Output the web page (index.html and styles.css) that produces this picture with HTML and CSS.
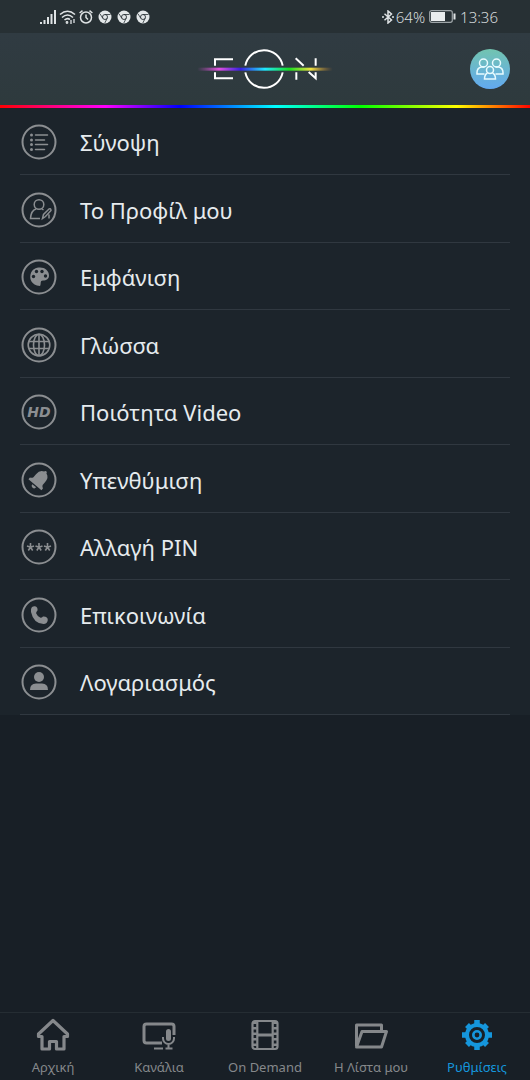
FILE: index.html
```html
<!DOCTYPE html>
<html lang="el">
<head>
<meta charset="utf-8">
<meta name="viewport" content="width=device-width, initial-scale=1">
<title>EON – Ρυθμίσεις</title>
<link rel="stylesheet" href="styles.css">
</head>
<body>
<svg class="defs" aria-hidden="true">
  <symbol id="browser" viewBox="0 0 14 14">
    <circle cx="7" cy="7" r="6.5" fill="#e3e7e9"/>
    <circle cx="7" cy="7" r="2.5" fill="none" stroke="#273034" stroke-width=".9"/>
    <path d="M7 4.500h5.500M4.800 8.300L2 3.800M9.200 8.300L6.800 13" stroke="#273034" stroke-width=".8" fill="none"/>
  </symbol>
</svg>
<div class="app">
  <div class="status">
    <div class="status-left">
      <svg width="16" height="14" viewBox="0 0 16 14" stroke="#dfe3e5" stroke-width="2"><path d="M1 14v-2M4.500 14v-4M8 14V7M11.500 14V4M15 14V0"/></svg>
      <svg width="17" height="14" viewBox="0 0 17 14" fill="none" stroke="#dfe3e5" stroke-width="1.600"><path d="M1 4.500Q8.500-2 16 4.500M3 7.500Q8.500 2.500 14 7.500M5.500 10Q8.500 7.500 11 9.500"/><circle cx="8" cy="12.500" r=".6"/><path d="M12 10v4M15 9v4" stroke-width="1.300"/></svg>
      <svg width="14" height="14" viewBox="0 0 14 14" fill="none" stroke="#dfe3e5" stroke-width="1.500"><circle cx="7" cy="7.500" r="5.500"/><path d="M7 4.500v3l2 2M.6 3L3.500.6M13.400 3L10.500.6"/></svg>
      <div class="browsers">
        <svg width="14" height="14"><use href="#browser"/></svg>
        <svg width="14" height="14"><use href="#browser"/></svg>
        <svg width="14" height="14"><use href="#browser"/></svg>
      </div>
    </div>
    <div class="status-right">
      <svg width="12" height="14" viewBox="0 0 12 14" fill="none" stroke="#dfe3e5" stroke-width="1.500"><path d="M2.500 3.800l7 6.200L6 13V1l3.500 3-7 6.200"/><path d="M0 7h2M10 7h2"/></svg>
      <span>64%</span>
      <svg class="battery" width="27" height="13" viewBox="0 0 27 13"><rect x=".7" y=".7" width="22.600" height="11.600" rx="2" fill="none" stroke="#9ea5a8" stroke-width="1.200"/><path d="M2 2h14v9H2z" fill="#e9eced"/><path d="M25.500 3.500v6" stroke="#dfe3e5" stroke-width="2"/></svg>
      <time>13:36</time>
    </div>
  </div>

  <header class="header">
    <svg class="logo" width="140" height="40" viewBox="45 45 420 120" role="img" aria-label="EON">
      <defs><linearGradient id="beam"><stop offset="0" stop-color="#c050c0" stop-opacity="0"/><stop offset=".16" stop-color="#e050e0"/><stop offset=".32" stop-color="#3520e0"/><stop offset=".5" stop-color="#20e8ff"/><stop offset=".68" stop-color="#18e020"/><stop offset=".84" stop-color="#f0e040"/><stop offset="1" stop-color="#d08030" stop-opacity="0"/></linearGradient></defs>
      <g fill="none" stroke="#fff" stroke-width="6">
        <path d="M159 76H105V95M105 115V133H159M196 95A57 57 0 0 1 308 95M196 115A57 57 0 0 0 308 115M407 73V95M349 115V137M347 73L371 95M386 114L407 133V115"/>
      </g>
      <rect x="52" y="101" width="406" height="9" fill="url(#beam)"/>
    </svg>
    <button class="profiles" type="button" aria-label="Προφίλ">
      <svg width="28" height="24" viewBox="0 0 28 24" fill="none" stroke="#e8fbff" stroke-width="1.500"><circle cx="7.500" cy="6" r="4"/><circle cx="20.500" cy="6" r="4"/><path d="M8.500 17H1v-1.500q0-4.500 4.500-5.500h3M19.500 17H27v-1.500q0-4.500-4.500-5.500h-3"/><circle cx="14" cy="13" r="3.500"/><path d="M11.500 16q-3 1.500-3 6h11q0-4.500-3-6"/></svg>
    </button>
  </header>

  <main class="content">
    <ul class="menu">
      <li><a href="#"><svg class="icon" viewBox="0 0 36 36"><circle cx="18" cy="18" r="16.500"/><path d="M14.500 11h12M14.500 16h9M14.500 20.500h12M14.500 25.500h9" stroke-linecap="round" stroke-width="1.500"/><g class="solid"><circle cx="10.500" cy="11" r="1.500"/><circle cx="10.500" cy="16" r="1.500"/><circle cx="10.500" cy="20.500" r="1.500"/><circle cx="10.500" cy="25.500" r="1.500"/></g></svg><span>Σύνοψη</span></a></li>
      <li><a href="#"><svg class="icon" viewBox="0 0 36 36"><circle cx="18" cy="18" r="16.500"/><g stroke-width="1.500"><circle cx="18" cy="12.500" r="4.800"/><path d="M15 17q-5 1.500-5.500 9.500H19M21 17l1.500 1"/><path d="M21.500 26.500l1-4 5.500-5.500q2-1.200 2 1.500l-5.500 6zM28 22.500v4"/></g></svg><span>Το Προφίλ μου</span></a></li>
      <li><a href="#"><svg class="icon" viewBox="0 0 36 36"><circle cx="18" cy="18" r="16.500"/><path class="solid" d="M19 27C10 26 8.500 20 9.500 15.500C11 10 15 8.500 19 8.500C24 8.500 28 12 28 16.500C28 20 25.500 21.500 22 21.500C18.500 21.500 20.500 25 19 27Z"/><g class="hole"><circle cx="12.500" cy="17.500" r="1.700"/><circle cx="15.500" cy="12.500" r="1.700"/><circle cx="21" cy="12.500" r="1.700"/><circle cx="24.500" cy="17" r="1.700"/></g></svg><span>Εμφάνιση</span></a></li>
      <li><a href="#"><svg class="icon" viewBox="0 0 36 36"><circle cx="18" cy="18" r="16.500"/><g stroke-width="1.600"><circle cx="18" cy="18" r="10.800"/><ellipse cx="18" cy="18" rx="5.500" ry="10.800"/><path d="M18 7v22M8 14.500h20M8 21.500h20"/></g></svg><span>Γλώσσα</span></a></li>
      <li><a href="#"><svg class="icon" viewBox="0 0 36 36"><circle cx="18" cy="18" r="16.500"/><text class="hd" x="18" y="23" text-anchor="middle">HD</text></svg><span>Ποιότητα Video</span></a></li>
      <li><a href="#"><svg class="icon" viewBox="0 0 36 36"><circle cx="18" cy="18" r="16.500"/><g class="solid" transform="rotate(40 18 18)"><path d="M16.500 8.200a1.500 1.500 0 0 1 3 0q4.500 1.300 4.500 7.300v4q.5 1.500 2.500 2.500v2.300h-17V22q2-1 2.500-2.500v-4q0-6 4.500-7.300zM15.500 25.500h5a2.500 2.500 0 0 1-5 0z"/></g></svg><span>Υπενθύμιση</span></a></li>
      <li><a href="#"><svg class="icon" viewBox="0 0 36 36"><circle cx="18" cy="18" r="16.500"/><path d="M9.500 14v4.200M6 17l3.500 1.200L13 17M7.300 21.500l2.200-3.300 2.200 3.300M18 14v4.200M14.500 17l3.500 1.200 3.500-1.200M15.800 21.500l2.200-3.300 2.200 3.300M26.500 14v4.200M23 17l3.500 1.200L30 17M24.300 21.500l2.200-3.300 2.200 3.300" stroke-width="1.600"/></svg><span>Αλλαγή PIN</span></a></li>
      <li><a href="#"><svg class="icon" viewBox="0 0 36 36"><circle cx="18" cy="18" r="16.500"/><path class="solid" d="M10 12.500Q10.500 9 14 9.300Q17 10 16.500 13.500Q14.800 15 15.200 16.500Q16.500 19.500 19.500 20.800Q21 20.800 22 19.500Q26.800 19.200 26.800 23Q26.300 27 22.500 27Q12.500 26.500 10 15Z"/></svg><span>Επικοινωνία</span></a></li>
      <li><a href="#"><svg class="icon" viewBox="0 0 36 36"><circle cx="18" cy="18" r="16.500"/><g class="solid"><circle cx="18" cy="13" r="5"/><path d="M9 26q0-6.500 6-6.500h6q6 0 6 6.500z"/></g></svg><span>Λογαριασμός</span></a></li>
    </ul>
  </main>

  <nav class="tabs">
    <a href="#"><svg width="34" height="34" viewBox="0 0 34 34" stroke-linejoin="round"><path d="M17 2.500L2.500 16v2.500H6V31h7.500v-7.500h7V31H28V18.500h3.500V16z" stroke-width="3.200"/></svg><span>Αρχική</span></a>
    <a href="#"><svg width="34" height="34" viewBox="0 0 34 34"><path d="M20 25H4.500q-2.500 0-2.500-2.500V8.500Q2 6 4.500 6h25Q32 6 32 8.500V17" stroke-width="3"/><path d="M12 30.500h9" stroke-width="2"/><rect class="fill" x="24" y="11" width="5" height="12" rx="2.500"/><path d="M21 19v1.500a5.500 5.500 0 0 0 11 0V19M26.500 26v4.500M23.500 30.500h7" stroke-width="2"/></svg><span>Κανάλια</span></a>
    <a href="#"><svg width="34" height="34" viewBox="0 0 34 34"><rect x="4.500" y="3" width="25" height="28" rx="2.500" stroke-width="2.200"/><path d="M9.300 3v28M24.700 3v28" stroke-width="2.200"/><path d="M9 17h16" stroke-width="3"/><path d="M6.800 3.500v27M27.200 3.500v27" stroke-width="4" stroke-dasharray="2.500 3"/></svg><span>On Demand</span></a>
    <a href="#"><svg width="34" height="34" viewBox="0 0 34 34" stroke-linejoin="round"><path d="M2.500 28V7h25v6M2.500 29L8 13.500h24.500L27.500 29z" stroke-width="3"/></svg><span>Η Λίστα μου</span></a>
    <a href="#" class="active" aria-current="page"><svg width="34" height="34" viewBox="0 0 34 34"><circle cx="17" cy="17" r="10" stroke-width="4"/><path d="M17 2v5M17 27v5M2 17h5M27 17h5M7 7l3 3M24 24l3 3M7 27l3-3M24 10l3-3" stroke-width="5.500"/><circle cx="17" cy="17" r="3.700" stroke-width="2.600"/></svg><span>Ρυθμίσεις</span></a>
  </nav>
</div>
</body>
</html>
```
FILE: styles.css
```css
* { box-sizing: border-box; }

body {
  margin: 0;
  background: #181f26;
  color: #e6ebee;
  font-family: "Noto Sans", sans-serif;
}

a { color: inherit; text-decoration: none; }
svg { flex: none; }
.defs { display: none; }

.app {
  display: flex;
  flex-direction: column;
  min-height: 100vh;
}

.status {
  display: flex;
  align-items: center;
  justify-content: space-between;
  height: 33px;
  padding: 0 32px 0 40px;
  background: #273034;
}
.status-left, .status-right, .browsers { display: flex; align-items: center; }
.status-left { gap: 3px; }
.browsers { gap: 5px; margin-left: 2px; }
.status-right {
  gap: 2px;
  color: #d8dcde;
  font-size: 15px;
  font-weight: 300;
}
.battery { margin: 0 2px; }

.header {
  display: grid;
  grid-template-columns: 1fr auto 1fr;
  align-items: center;
  height: 75px;
  padding: 0 20px;
  background: linear-gradient(#303b42, #2e3a3d);
  border-bottom: 3px solid;
  border-image: linear-gradient(90deg, #f00, #f0f 20%, #00f 34%, #0ff 52%, #0f0 68%, #ff0 86%, #f00) 1;
}
.logo { grid-column: 2; }
.profiles {
  display: grid;
  place-items: center;
  justify-self: end;
  width: 40px;
  height: 40px;
  padding: 0;
  border: 0;
  border-radius: 50%;
  background: linear-gradient(#72c4b0, #62a9f0);
}

.content { flex: 1; }
.menu {
  margin: 0;
  padding: 0 20px;
  list-style: none;
  background: #1c242b;
}
.menu li { height: 67px; border-bottom: 1px solid #303840; }
.menu li:nth-child(even) { height: 68px; }
.menu a {
  display: flex;
  align-items: center;
  gap: 23px;
  height: 100%;
  padding: 2px 0 0 1px;
  font-size: 22px;
}
.icon {
  width: 36px;
  height: 36px;
  fill: none;
  stroke: #8b8e91;
  stroke-width: 2;
}
.solid { fill: #8b8e91; stroke: none; }
.hole { fill: #1c242b; stroke: none; }
.hd {
  fill: #8b8e91;
  stroke: none;
  font: italic 700 14px "DejaVu Sans", sans-serif;
}

.tabs {
  display: grid;
  grid-template-columns: repeat(5, 1fr);
  height: 68px;
  border-top: 1px solid #252d33;
  background: #181f26;
  color: #85888b;
}
.tabs a {
  display: flex;
  flex-direction: column;
  align-items: center;
  gap: 5px;
  padding-top: 5px;
  font-size: 13px;
  line-height: 20px;
  white-space: nowrap;
}
.tabs svg { fill: none; stroke: currentColor; }
.tabs .fill { fill: currentColor; stroke: none; }
.tabs .active { color: #1596dc; }
```
